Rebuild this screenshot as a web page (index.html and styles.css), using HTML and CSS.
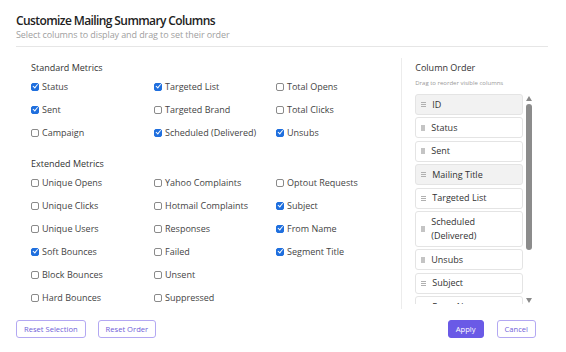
FILE: index.html
```html
<!DOCTYPE html>
<html lang="en">
<head>
    <meta charset="UTF-8">
    <meta name="viewport" content="width=device-width, initial-scale=1.0">
    <title>Customize Mailing Summary Columns</title>
    <link rel="stylesheet" href="styles.css">
</head>
<body>
    <div class="dialog">
        <div class="header">
            <h1>Customize Mailing Summary Columns</h1>
            <p class="subtitle">Select columns to display and drag to set their order</p>
        </div>

        <div class="main">
            <div class="metrics">
                <h2>Standard Metrics</h2>
                <div class="grid">
                    <label class="check"><span class="box on"></span>Status</label>
                    <label class="check"><span class="box on"></span>Targeted List</label>
                    <label class="check"><span class="box"></span>Total Opens</label>
                    <label class="check"><span class="box on"></span>Sent</label>
                    <label class="check"><span class="box"></span>Targeted Brand</label>
                    <label class="check"><span class="box"></span>Total Clicks</label>
                    <label class="check"><span class="box"></span>Campaign</label>
                    <label class="check"><span class="box on"></span>Scheduled (Delivered)</label>
                    <label class="check"><span class="box on"></span>Unsubs</label>
                </div>

                <h2 class="second">Extended Metrics</h2>
                <div class="grid">
                    <label class="check"><span class="box"></span>Unique Opens</label>
                    <label class="check"><span class="box"></span>Yahoo Complaints</label>
                    <label class="check"><span class="box"></span>Optout Requests</label>
                    <label class="check"><span class="box"></span>Unique Clicks</label>
                    <label class="check"><span class="box"></span>Hotmail Complaints</label>
                    <label class="check"><span class="box on"></span>Subject</label>
                    <label class="check"><span class="box"></span>Unique Users</label>
                    <label class="check"><span class="box"></span>Responses</label>
                    <label class="check"><span class="box on"></span>From Name</label>
                    <label class="check"><span class="box on"></span>Soft Bounces</label>
                    <label class="check"><span class="box"></span>Failed</label>
                    <label class="check"><span class="box on"></span>Segment Title</label>
                    <label class="check"><span class="box"></span>Block Bounces</label>
                    <label class="check"><span class="box"></span>Unsent</label>
                    <span></span>
                    <label class="check"><span class="box"></span>Hard Bounces</label>
                    <label class="check"><span class="box"></span>Suppressed</label>
                    <span></span>
                </div>
            </div>

            <div class="order">
                <h2>Column Order</h2>
                <p class="hint">Drag to reorder visible columns</p>
                <div class="order-box">
                    <div class="order-list">
                        <div class="item active"><span class="grip"></span>ID</div>
                        <div class="item"><span class="grip solid"></span>Status</div>
                        <div class="item"><span class="grip solid"></span>Sent</div>
                        <div class="item active"><span class="grip"></span>Mailing Title</div>
                        <div class="item"><span class="grip"></span>Targeted List</div>
                        <div class="item tall"><span class="grip solid"></span>Scheduled<br>(Delivered)</div>
                        <div class="item"><span class="grip solid"></span>Unsubs</div>
                        <div class="item"><span class="grip"></span>Subject</div>
                        <div class="item"><span class="grip"></span>From Name</div>
                        <div class="item"><span class="grip"></span>Segment Title</div>
                    </div>
                    <div class="scrollbar">
                        <span class="arrow up"></span>
                        <span class="track"><span class="thumb"></span></span>
                        <span class="arrow down"></span>
                    </div>
                </div>
            </div>
        </div>

        <div class="footer">
            <div class="left-buttons">
                <button class="btn">Reset Selection</button>
                <button class="btn">Reset Order</button>
            </div>
            <div class="right-buttons">
                <button class="btn primary">Apply</button>
                <button class="btn">Cancel</button>
            </div>
        </div>
    </div>
</body>
</html>
```

FILE: styles.css
```css
body {
    margin: 0;
    background-color: #ffffff;
    font-family: "Open Sans", "Noto Sans", Arial, sans-serif;
    color: #333;
}
.dialog {
    width: 532px;
    padding: 13px 18px 0 16px;
}
.header {
    padding-bottom: 6px;
    border-bottom: 1px solid #e6e6e6;
}
h1 {
    margin: 0;
    font-size: 12px;
    line-height: 16px;
    font-weight: 600;
    letter-spacing: -0.6px;
    color: #222;
}
.subtitle {
    margin: 0;
    font-size: 9px;
    line-height: 11px;
    letter-spacing: -0.1px;
    color: #a0a0a0;
}
.main {
    display: flex;
    margin-top: 11px;
}
.metrics {
    width: 371px;
    padding: 3px 0 0 15px;
    border-right: 1px solid #ececec;
}
h2 {
    margin: 0;
    font-size: 9px;
    line-height: 14px;
    font-weight: 400;
    color: #333;
}
h2.second {
    margin-top: 13px;
}
.grid {
    display: grid;
    grid-template-columns: 123px 122px 1fr;
    grid-auto-rows: 23px;
}
.check {
    display: flex;
    align-items: center;
    font-size: 9px;
    color: #444;
}
.box {
    width: 6px;
    height: 6px;
    margin-right: 3px;
    border: 1px solid #8a8a8a;
    border-radius: 2px;
    background-color: #fff;
    position: relative;
}
.box.on {
    border-color: #1f6fde;
    background-color: #1f6fde;
}
.box.on::after {
    content: "";
    position: absolute;
    left: 1.6px;
    top: -0.3px;
    width: 1.8px;
    height: 3.6px;
    border: solid #fff;
    border-width: 0 1.2px 1.2px 0;
    transform: rotate(40deg);
}
.order {
    width: 133px;
    padding: 3px 0 0 13px;
}
.hint {
    margin: 3px 0 0;
    font-size: 6px;
    line-height: 10px;
    color: #999;
}
.order-box {
    display: flex;
    margin-top: 6px;
    height: 210px;
}
.order-list {
    width: 108px;
    overflow: hidden;
}
.item {
    display: flex;
    align-items: center;
    box-sizing: border-box;
    height: 21px;
    margin-bottom: 2.4px;
    padding-left: 5px;
    border: 1px solid #e4e4e4;
    border-radius: 3px;
    background-color: #fff;
    font-size: 9px;
    line-height: 14px;
    color: #333;
}
.item.active {
    background-color: #f2f2f2;
}
.item.tall {
    height: 36px;
}
.grip {
    flex: none;
    width: 5px;
    height: 5px;
    margin-right: 6px;
    background: repeating-linear-gradient(#b0b0b0 0 1px, transparent 1px 2px);
}
.grip.solid {
    background: #c4c4c4;
    height: 6px;
    width: 4px;
}
.scrollbar {
    display: flex;
    flex-direction: column;
    align-items: center;
    width: 8px;
    margin-left: 2px;
}
.arrow {
    width: 0;
    height: 0;
    border-left: 3.5px solid transparent;
    border-right: 3.5px solid transparent;
}
.arrow.up {
    margin-top: 2px;
    border-bottom: 5px solid #8a8a8a;
}
.arrow.down {
    margin-bottom: 1px;
    border-top: 5px solid #8a8a8a;
}
.track {
    flex: 1;
    width: 100%;
    padding-top: 3px;
}
.thumb {
    display: block;
    width: 6px;
    margin: 0 auto;
    height: 146px;
    border-radius: 3px;
    background-color: #8c8c8c;
}
.footer {
    display: flex;
    justify-content: space-between;
    margin-top: 11px;
    padding-right: 12px;
}
.left-buttons, .right-buttons {
    display: flex;
    gap: 12px;
}
.right-buttons {
    gap: 13px;
}
.btn {
    box-sizing: border-box;
    height: 18px;
    padding: 0 7px;
    border: 1px solid #b3a8f2;
    border-radius: 3px;
    background-color: #fff;
    font-family: "Open Sans", "Noto Sans", Arial, sans-serif;
    font-size: 7.6px;
    line-height: 16px;
    color: #6f60d8;
    cursor: pointer;
}
.btn.primary {
    background-color: #6a5ae6;
    border-color: #6a5ae6;
    color: #fff;
}
```
